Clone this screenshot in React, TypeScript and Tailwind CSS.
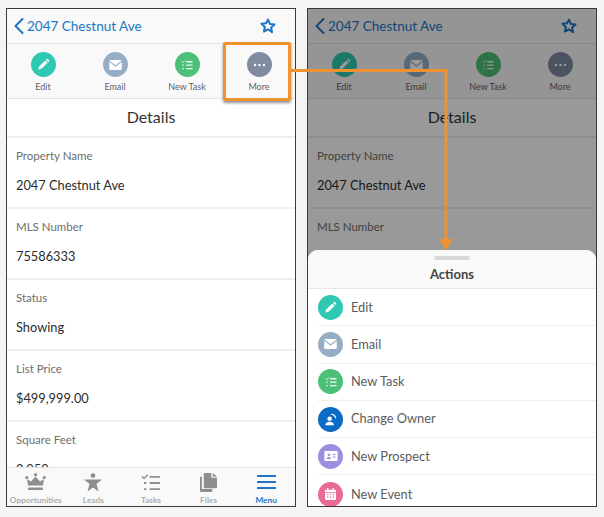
import { ReactNode } from "react";

const Circle = ({ color, size, children }: { color: string; size: string; children: ReactNode }) => (
  <div className={`flex shrink-0 items-center justify-center rounded-full ${color} ${size}`}>{children}</div>
);

const PencilIcon = () => (
  <svg width="13" height="13" viewBox="0 0 14 14" fill="white">
    <path d="M1.500 12.500l.8-3.300 6.600-6.600 2.500 2.500-6.600 6.600z" />
    <path d="M9.700 1.800l.8-.8c.3-.3.8-.3 1.100 0l1.400 1.400c.3.3.3.8 0 1.100l-.8.8z" />
  </svg>
);

const MailIcon = () => (
  <svg width="13" height="10" viewBox="0 0 15 12" fill="white">
    <path d="M1 0h13c.4 0 .7.2.8.5L7.500 6.300.2.500C.3.2.6 0 1 0z" />
    <path d="M0 2.200l7.500 5.900L15 2.200V11c0 .6-.4 1-1 1H1c-.6 0-1-.4-1-1z" />
  </svg>
);

const TaskIcon = () => (
  <svg width="12" height="12" viewBox="0 0 14 14" fill="none" stroke="white" opacity=".9">
    <path d="M1 3l1.200 1.200L4.400 1.600" strokeWidth="1.100" />
    <path d="M6 3.200h7.500M6 7.200h7.500M6 11.200h7.500" strokeWidth="1.600" />
    <path d="M1.500 7.200h1.600M1.500 11.200h1.600" strokeWidth="1.600" />
  </svg>
);

const DotsIcon = () => (
  <svg width="13" height="4" viewBox="0 0 14 4" fill="white">
    <circle cx="2.200" cy="2" r="1.300" />
    <circle cx="7" cy="2" r="1.300" />
    <circle cx="11.800" cy="2" r="1.300" />
  </svg>
);

const OwnerIcon = () => (
  <svg width="13" height="13" viewBox="0 0 15 15" fill="white">
    <circle cx="6.500" cy="6.500" r="2.600" />
    <path d="M1.500 14c0-2.600 2-4 5-4s5 1.400 5 4z" />
    <path d="M8 1.500a5 5 0 0 1 5.500 4.600" fill="none" stroke="white" strokeWidth="1.300" />
  </svg>
);

const ProspectIcon = () => (
  <svg width="14" height="10" viewBox="0 0 16 12" fill="white">
    <path
      fillRule="evenodd"
      d="M1 0h14c.6 0 1 .4 1 1v10c0 .6-.4 1-1 1H1c-.6 0-1-.4-1-1V1c0-.6.4-1 1-1zm4.500 3a1.600 1.600 0 1 0 0 3.200A1.600 1.600 0 0 0 5.500 3zM2.800 9.500h5.400c0-1.500-1.100-2.400-2.700-2.400s-2.700.9-2.700 2.400zM10 3.500v1.200h3.500V3.500zm0 3v1.200h3.500V6.500z"
    />
  </svg>
);

const CalendarIcon = () => (
  <svg width="11" height="12" viewBox="0 0 13 14" fill="white">
    <rect x="2.500" y="0" width="1.600" height="3" rx=".6" />
    <rect x="8.900" y="0" width="1.600" height="3" rx=".6" />
    <path d="M1 2h11c.6 0 1 .4 1 1v1.500H0V3c0-.6.4-1 1-1z" />
    <path
      fillRule="evenodd"
      d="M0 5.500h13V13c0 .6-.4 1-1 1H1c-.6 0-1-.4-1-1zM2.500 7v1.500H4V7zm3.200 0v1.500h1.500V7zM9 7v1.500h1.500V7zm-6.500 3v1.500H4V10zm3.200 0v1.500h1.500V10zM9 10v1.500h1.500V10z"
    />
  </svg>
);

const ChevronLeft = () => (
  <svg width="10" height="16" viewBox="0 0 10 16" fill="none" stroke="#1d76c5" strokeWidth="2" strokeLinecap="round" strokeLinejoin="round">
    <path d="M8.500 1L1.500 8l7 7" />
  </svg>
);

const StarIcon = () => (
  <svg width="16" height="16" viewBox="0 0 24 24" fill="none" stroke="#1d76c5" strokeWidth="3" strokeLinejoin="round">
    <path d="M12 2.500l2.900 6.400 6.900.8-5.100 4.700 1.400 6.900L12 16.900l-6.100 3.400 1.400-6.900-5.100-4.700 6.900-.8z" />
  </svg>
);

const CrownIcon = () => (
  <svg width="21" height="18" viewBox="0 0 21 18" fill="#8e8e8e">
    <circle cx="1.800" cy="4.500" r="1.600" />
    <circle cx="10.500" cy="1.700" r="1.600" />
    <circle cx="19.200" cy="4.500" r="1.600" />
    <path d="M2 6l4 2.500L10.500 3.500 15 8.500 19 6l-1 6.500H3z" />
    <rect x="3" y="14.500" width="15" height="2.500" rx=".8" />
  </svg>
);

const PersonStarIcon = () => (
  <svg width="20" height="19" viewBox="0 0 20 19" fill="#8e8e8e">
    <circle cx="10" cy="2.600" r="2.400" />
    <path d="M1 6.500h18l-5.500 4.500 2 7.500-5.500-4-5.500 4 2-7.500z" />
  </svg>
);

const TasksIcon = () => (
  <svg width="19" height="17" viewBox="0 0 20 18" fill="none" stroke="#8e8e8e">
    <path d="M1 2.500l2.200 2.200L7 .8" strokeWidth="1.500" />
    <path d="M9 3h11M9 9.500h11M9 16h11" strokeWidth="2" />
    <path d="M3 9.500h2.500M3 16h2.500" strokeWidth="2" />
  </svg>
);

const FilesIcon = () => (
  <svg width="17" height="19" viewBox="0 0 18 20" fill="#8e8e8e">
    <path d="M0 4h2v12c0 .6.400 1 1 1h10v2c0 .6-.4 1-1 1H1c-.6 0-1-.4-1-1z" />
    <path d="M5 0h7v5h6v10c0 .6-.4 1-1 1H5c-.6 0-1-.4-1-1V1c0-.6.400-1 1-1z" />
    <path d="M13.500 0L18 3.800h-4.500z" />
  </svg>
);

const MenuIcon = () => (
  <svg width="19" height="14" viewBox="0 0 19 14" fill="#1d76c5">
    <rect y="0" width="19" height="2" rx=".5" />
    <rect y="6" width="19" height="2" rx=".5" />
    <rect y="12" width="19" height="2" rx=".5" />
  </svg>
);

const ActionItem = ({ icon, color, label }: { icon: ReactNode; color: string; label: string }) => (
  <div className="flex w-[72px] flex-col items-center">
    <Circle color={color} size="size-[25px]">
      {icon}
    </Circle>
    <span className="mt-[3px] text-[9px] leading-[13px] text-[#5f6368]">{label}</span>
  </div>
);

const Field = ({ label, value }: { label: string; value: string }) => (
  <div className="h-[71px] shrink-0 border-b-2 border-[#eeeeee] bg-white px-[9px] pt-[10px]">
    <div className="text-[11.500px] leading-[16px] text-[#6e6e6e]">{label}</div>
    <div className="mt-[12px] text-[12.800px] leading-[18px] text-[#2b2b2b]">{value}</div>
  </div>
);

const TabItem = ({ icon, label, active }: { icon: ReactNode; label: string; active?: boolean }) => (
  <div className="flex flex-1 flex-col items-center">
    <div className="flex h-[20px] items-center">{icon}</div>
    <span className={`mt-[3px] text-[8.300px] leading-[11px] font-bold ${active ? "text-[#1d76c5]" : "text-[#adadad]"}`}>{label}</span>
  </div>
);

const SheetRow = ({ icon, color, label }: { icon: ReactNode; color: string; label: string }) => (
  <div className="flex h-[37.300px] shrink-0 items-center gap-[8px] border-b border-[#efefef] last:border-b-0">
    <Circle color={color} size="size-[25px]">
      {icon}
    </Circle>
    <span className="text-[12.800px] text-[#5c5c5c]">{label}</span>
  </div>
);

const Phone = ({ children, overlay }: { children?: ReactNode; overlay?: ReactNode }) => (
  <div className="relative flex h-[499px] w-[290px] flex-col overflow-hidden border border-[#3a3a3a] bg-white">
    <div className="flex h-[35px] shrink-0 items-center justify-between border-b border-[#e2e2e2] bg-[#f9f9f9] pr-[19px] pl-[7px]">
      <div className="flex items-center gap-[3px]">
        <ChevronLeft />
        <span className="text-[13.500px] text-[#1d76c5]">2047 Chestnut Ave</span>
      </div>
      <StarIcon />
    </div>
    <div className="flex h-[55px] shrink-0 border-b border-[#e6e6e6] bg-[#f9f9f9] pt-[8px]">
      <ActionItem icon={<PencilIcon />} color="bg-[#2fc8b2]" label="Edit" />
      <ActionItem icon={<MailIcon />} color="bg-[#95aec5]" label="Email" />
      <ActionItem icon={<TaskIcon />} color="bg-[#4bc076]" label="New Task" />
      <ActionItem icon={<DotsIcon />} color="bg-[#7f8ba0]" label="More" />
    </div>
    <div className="flex h-[39px] shrink-0 items-center justify-center border-b-2 border-[#eeeeee] pb-px text-[16px] text-[#333333]">Details</div>
    {children}
    {overlay}
  </div>
);

export default function App() {
  return (
    <div className="relative h-[517px] w-[604px] overflow-hidden bg-[#f4f4f4] font-['Lato',sans-serif]">
      <div className="flex gap-[11px] pt-[8px] pl-[6px]">
        <Phone>
          <Field label="Property Name" value="2047 Chestnut Ave" />
          <Field label="MLS Number" value="75586333" />
          <Field label="Status" value="Showing" />
          <Field label="List Price" value="$499,999.00" />
          <Field label="Square Feet" value="2,050" />
          <div className="absolute inset-x-0 bottom-0 flex h-[39px] border-t border-[#e2e2e2] bg-[#f9f9f9] pt-[4px]">
            <TabItem icon={<CrownIcon />} label="Opportunities" />
            <TabItem icon={<PersonStarIcon />} label="Leads" />
            <TabItem icon={<TasksIcon />} label="Tasks" />
            <TabItem icon={<FilesIcon />} label="Files" />
            <TabItem icon={<MenuIcon />} label="Menu" active />
          </div>
        </Phone>

        <Phone
          overlay={
            <>
              <div className="absolute inset-0 bg-black/40" />
              <div className="absolute inset-x-0 bottom-0 flex h-[256px] flex-col overflow-hidden rounded-t-[10px] bg-white">
                <div className="flex h-[39px] shrink-0 flex-col items-center border-b border-[#e8e8e8] bg-[#f9f9f9] pt-[6px]">
                  <div className="h-[4px] w-[36px] rounded-full bg-[#d8d8d8]" />
                  <span className="mt-[5px] text-[13px] leading-[18px] font-bold text-[#444444]">Actions</span>
                </div>
                <div className="flex flex-col pl-[10px]">
                  <SheetRow icon={<PencilIcon />} color="bg-[#2fc8b2]" label="Edit" />
                  <SheetRow icon={<MailIcon />} color="bg-[#95aec5]" label="Email" />
                  <SheetRow icon={<TaskIcon />} color="bg-[#4bc076]" label="New Task" />
                  <SheetRow icon={<OwnerIcon />} color="bg-[#0b6cc6]" label="Change Owner" />
                  <SheetRow icon={<ProspectIcon />} color="bg-[#9a8fe0]" label="New Prospect" />
                  <SheetRow icon={<CalendarIcon />} color="bg-[#e96a94]" label="New Event" />
                </div>
              </div>
            </>
          }
        >
          <Field label="Property Name" value="2047 Chestnut Ave" />
          <Field label="MLS Number" value="75586333" />
        </Phone>
      </div>

      {/* callout box + connector sit over both phones */}
      <div className="absolute top-[42px] left-[223px] h-[59px] w-[68px] rounded-[2px] border-[3px] border-[#f0922f] shadow-[0_2px_3px_rgba(0,0,0,0.45)]" />
      <svg className="absolute top-0 left-0" width="604" height="517" fill="none">
        <path d="M291 70.500H446V241" stroke="#f0922f" strokeWidth="3" strokeLinejoin="round" />
        <path d="M439 239h14l-7 11z" fill="#f0922f" />
      </svg>
    </div>
  );
}
